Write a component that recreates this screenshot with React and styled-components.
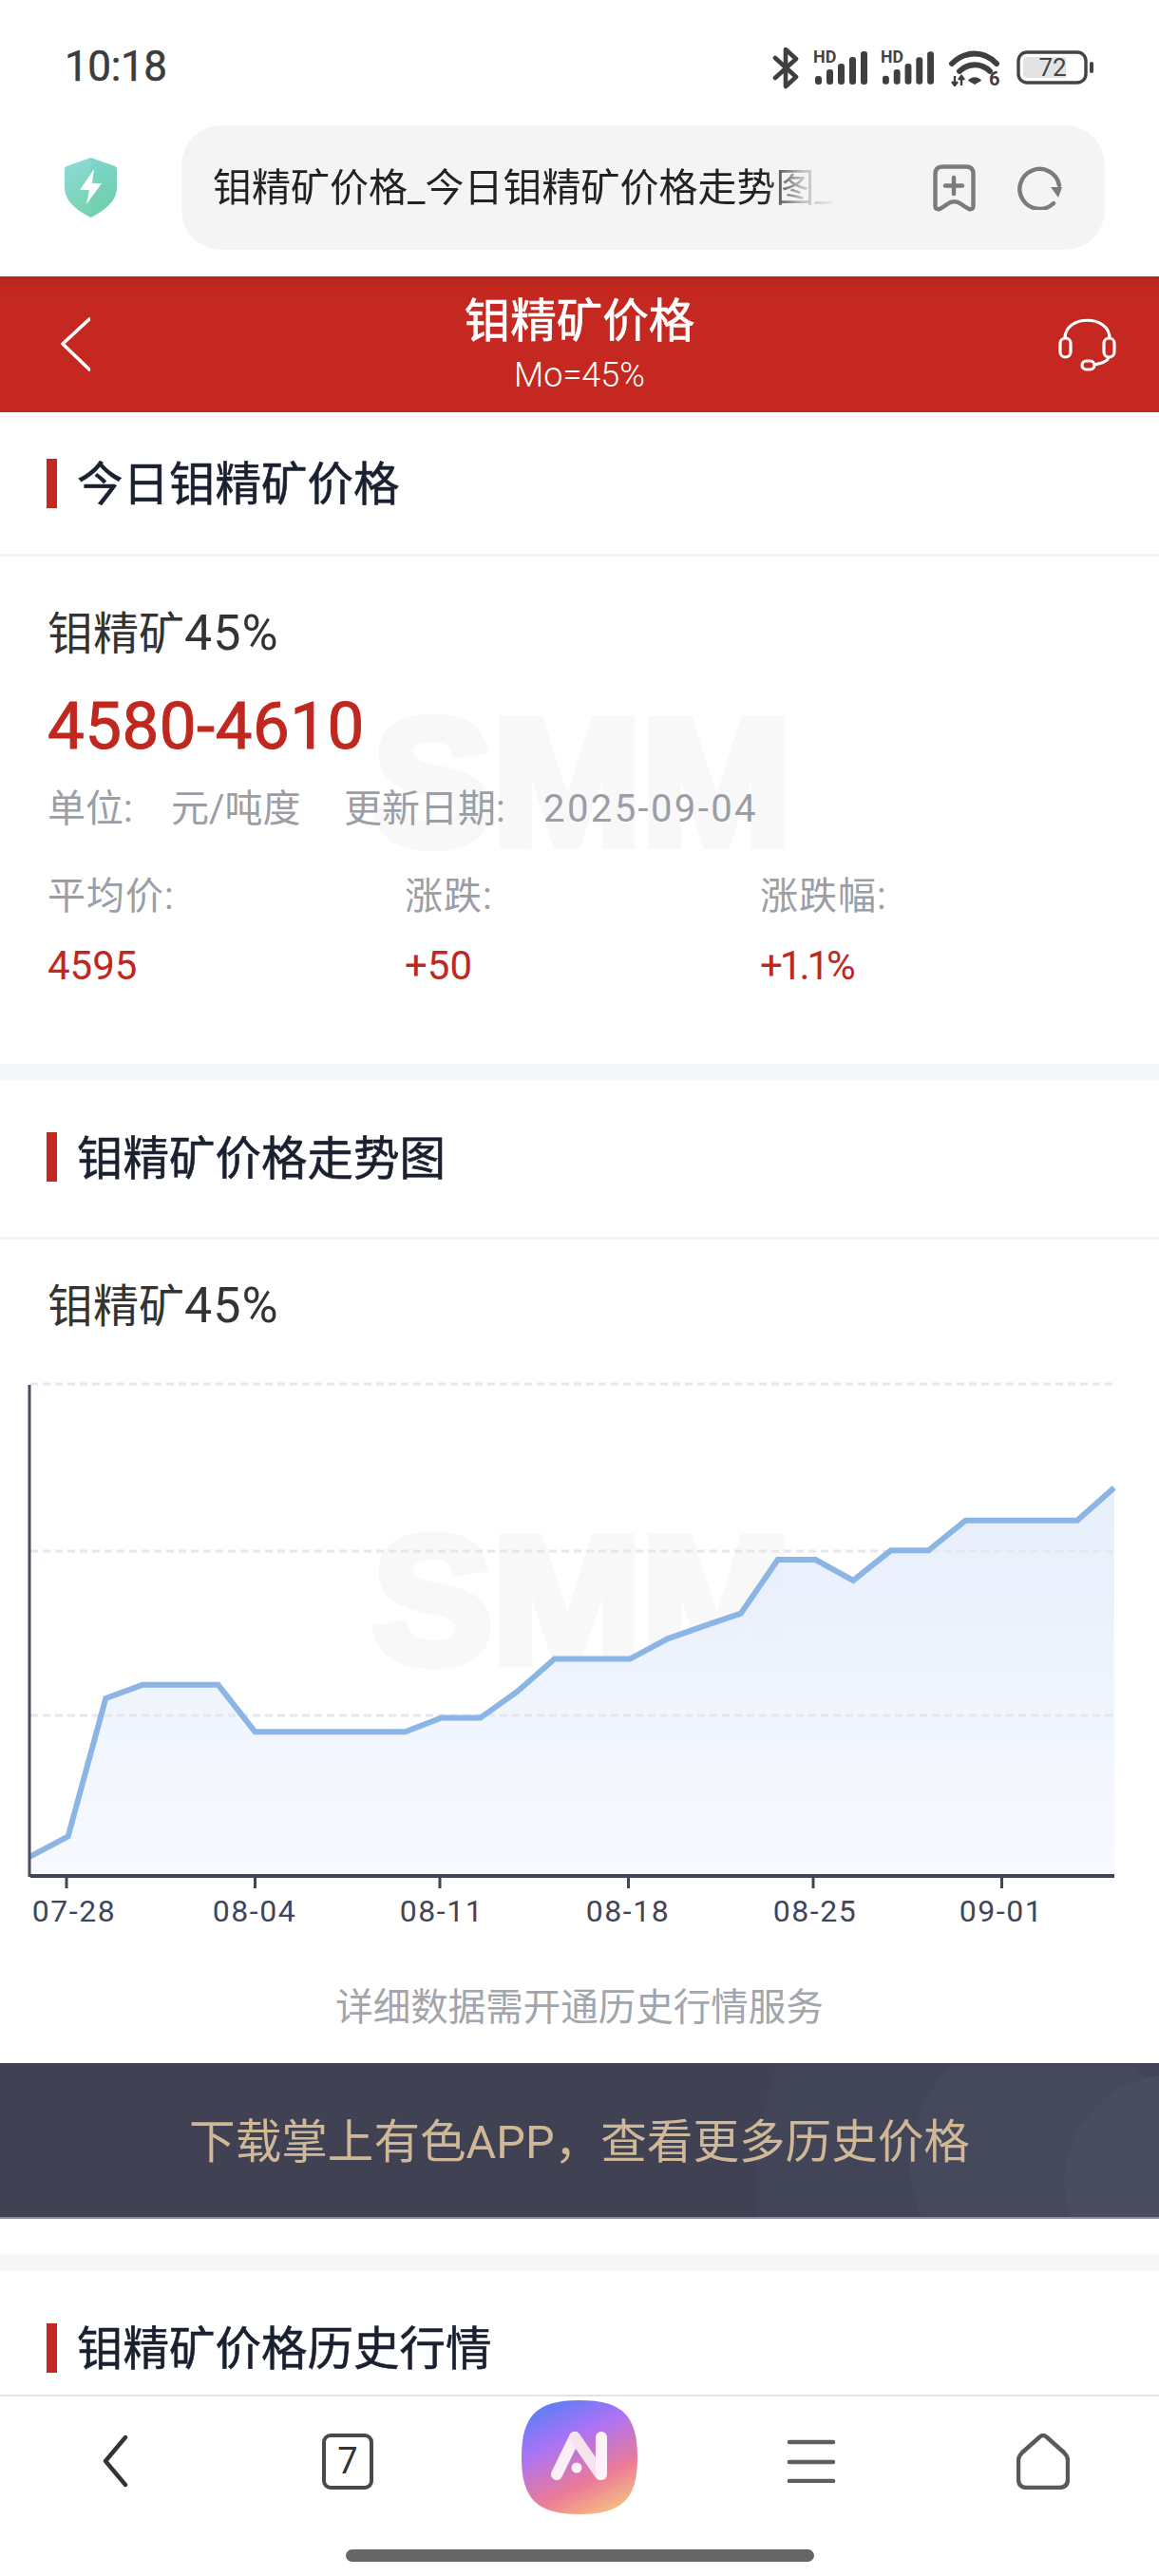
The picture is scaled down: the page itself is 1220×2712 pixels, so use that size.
import React from "react";
import styled, { createGlobalStyle } from "styled-components";

const FONT = `Roboto, "Noto Sans CJK SC", "Liberation Sans", sans-serif`;

const Global = createGlobalStyle`
  html, body { margin: 0; padding: 0; background: #fff; }
  * { box-sizing: border-box; }
`;

const Page = styled.div`
  width: 1220px; height: 2712px; overflow: hidden; display: flex; flex-direction: column;
  background: #fff; font-family: ${FONT};
`;

const StatusBar = styled.div`
  height: 132px; flex: none; display: flex; align-items: center; justify-content: space-between;
  padding: 8px 69px 0 68px;
`;
const Time = styled.div`font-size: 44px; line-height: 50px; color: #3c3c3c; letter-spacing: -0.4px; -webkit-text-stroke: 0.5px #3c3c3c;`;
const StatusIcons = styled.div`display: flex; align-items: center; gap: 14px; padding-top: 2px;`;

const Toolbar = styled.div`
  height: 159px; flex: none; display: flex; align-items: flex-start; padding-left: 68px;
`;
const ShieldWrap = styled.div`width: 55px; height: 63px; margin-top: 34px; flex: none; margin-right: 68px;`;
const AddressBar = styled.div`
  width: 972px; height: 131px; border-radius: 42px; background: #f4f4f4; display: flex; align-items: center;
  padding: 0 45px 0 33px;
`;
const AddressText = styled.div`
  width: 660px; flex: none; overflow: hidden; white-space: nowrap; font-size: 41px; line-height: 60px; color: #222;
  -webkit-mask-image: linear-gradient(90deg, #000 88%, rgba(0,0,0,.25) 94%, transparent 100%);
  mask-image: linear-gradient(90deg, #000 88%, rgba(0,0,0,.25) 94%, transparent 100%);
`;
const AddressActions = styled.div`margin-left: auto; display: flex; align-items: center; gap: 44px;`;

const Header = styled.div`
  height: 143px; flex: none; display: grid; grid-template-columns: 1fr auto 1fr; align-items: center;
  padding: 0 45px; background: linear-gradient(180deg, #b8251e 0, #c42820 12%, #c42820 100%);
  color: #fff;
`;
const HeaderLeft = styled.div`display: flex; justify-content: flex-start; padding-left: 19px;`;
const HeaderRight = styled.div`display: flex; justify-content: flex-end;`;
const HeaderCenter = styled.div`display: flex; flex-direction: column; align-items: center; gap: 7px; padding-bottom: 2px;`;
const HeaderTitle = styled.div`font-size: 48.5px; line-height: 60px; -webkit-text-stroke: 0.7px #fff;`;
const HeaderSub = styled.div`font-size: 36px; line-height: 38px; font-weight: 300;`;

const Content = styled.div`flex: 1; min-height: 0; overflow: hidden;`;

const SectionHead = styled.div`
  height: ${p => p.$h}px; display: flex; align-items: center; gap: 21px; padding: 0 0 ${p => p.$pb || 0}px 49px;
  border-bottom: 3px solid #f3f4f7;
`;
const HeadBar = styled.div`width: 11px; height: 52px; background: #c42820;`;
const HeadTitle = styled.h2`
  margin: 0; padding-top: 5px; font-size: 48.5px; line-height: 60px; font-weight: 400; color: #1b2030;
  -webkit-text-stroke: 0.6px #1b2030;
`;

const Quote = styled.div`position: relative; padding: 52px 50px 78px;`;
const Watermark = styled.div`
  position: absolute; left: ${p => p.$x}px; top: ${p => p.$y}px; font-family: "Liberation Sans", sans-serif;
  font-weight: 700; font-size: 190px; line-height: 190px; letter-spacing: -1px; color: #f8f8f8;
  -webkit-text-stroke: 10px #f8f8f8; pointer-events: none;
`;
const Layer = styled.div`position: relative;`;
const ProductName = styled.div`font-size: 48px; line-height: 60px; height: 60px; color: #333;`;
const Latin = styled.span`font-size: 52px; line-height: 0; letter-spacing: 1px;`;
const Price = styled.div`margin-top: 27px; font-size: 69px; line-height: 80px; letter-spacing: 0.5px; color: #c0281f; -webkit-text-stroke: 1px #c0281f;`;
const MetaRow = styled.div`margin-top: 22px; display: flex; font-size: 40px; line-height: 50px; color: #9b9ea5;`;
const MetaLabel = styled.span`width: ${p => p.$w}px; flex: none; white-space: nowrap; letter-spacing: ${p => p.$ls || 0}px;`;
const Stats = styled.div`margin-top: 42px; display: grid; grid-template-columns: 376px 374px 1fr;`;
const StatLabel = styled.div`font-size: 40px; line-height: 50px; color: #9b9ea5; letter-spacing: 1px;`;
const StatValue = styled.div`margin-top: 23px; font-size: 42px; line-height: 50px; color: #c0281f; letter-spacing: ${p => p.$ls || 0}px;`;

const Gap = styled.div`height: ${p => p.$h}px; background: #f6f7f9;`;

const ChartSection = styled.div`position: relative;`;
const ChartName = styled(ProductName)`height: auto; padding: 41px 0 0 50px;`;
const ChartSvg = styled.svg`display: block; margin-top: 34px; position: relative;`;
const Hint = styled.div`margin-top: 49px; text-align: center; font-size: 39.5px; line-height: 50px; color: #a2a5ab;`;
const Banner = styled.div`
  margin-top: 33px; height: 164px; display: flex; align-items: center; justify-content: center;
  font-size: 48.6px; color: #cfb897; border-bottom: 2px solid #8d8f9c; padding-bottom: 4px;
  background:
    radial-gradient(circle 114px at 1234px 126px, #4a4c5f 99%, transparent 100%),
    radial-gradient(circle 141px at 1098px 105px, #46485b 99%, transparent 100%),
    radial-gradient(circle 408px at 1201px 137px, #424457 99%, transparent 100%),
    #404254;
`;
const Spacer = styled.div`height: ${p => p.$h}px;`;

const Nav = styled.div`height: 191px; flex: none; border-top: 2px solid #e4e4e4; background: #fff; display: flex; flex-direction: column; align-items: center;`;
const NavRow = styled.div`
  width: 100%; height: 124px; padding-top: 4px; display: grid; grid-template-columns: repeat(5, 1fr);
  align-items: center; justify-items: center;
`;
const TabBox = styled.div`
  width: 54px; height: 59px; margin-top: 8px; border: 4px solid #4a4a4a; border-radius: 9px; display: flex;
  align-items: center; justify-content: center; font-size: 38px; line-height: 1; color: #333;
`;
const HomeIndicator = styled.div`width: 493px; height: 13px; margin-top: 37px; border-radius: 7px; background: #666;`;

const Bluetooth = () => (
  <svg width="29" height="45" viewBox="0 0 29 45" fill="none" stroke="#3f3f3f" strokeWidth="4.6" strokeLinejoin="round" strokeLinecap="round">
    <path d="M3 12 L25 32 L14 42 V3 L25 13 L3 33" />
  </svg>
);

const Signal = ({ w = 57 }) => (
  <svg width={w} height="38" viewBox="0 0 57 38">
    <text x="0" y="14" fontFamily="Roboto, sans-serif" fontSize="18" fontWeight="700" fill="#444">HD</text>
    {[[2, 9], [14, 16], [26, 22], [38, 29], [50, 35]].map(([x, h]) => (
      <rect key={x} x={x} y={37 - h} width="7" height={h} rx="3" fill="#3f3f3f" />
    ))}
  </svg>
);

const Wifi = () => (
  <svg width="56" height="40" viewBox="0 0 56 40" fill="none">
    <path d="M5 16 C19 2 39 2 52 16" stroke="#3f3f3f" strokeWidth="6" strokeLinecap="round" />
    <path d="M13 24 C22 15 36 15 45 24" stroke="#3f3f3f" strokeWidth="6" strokeLinecap="round" />
    <path d="M22 34 C25 29 33 29 36 34 L29 38 Z" fill="#3f3f3f" />
    <path d="M8 29 V39 M5 35 L8 39 L11 35 M15 39 V29 M12 33 L15 29 L18 33" stroke="#3f3f3f" strokeWidth="2.4" />
    <text x="44" y="39" fontFamily="Roboto, sans-serif" fontSize="20" fontWeight="700" fill="#3f3f3f">6</text>
  </svg>
);

const Battery = () => (
  <svg width="84" height="36" viewBox="0 0 84 36">
    <rect x="5" y="2" width="71" height="32" rx="9" fill="none" stroke="#444" strokeWidth="3.4" />
    <path d="M15 7 H55 V29 H15 Q10 29 10 24 V12 Q10 7 15 7 Z" fill="#e3e3e3" />
    <text x="41" y="27" textAnchor="middle" fontFamily="Roboto, sans-serif" fontSize="26" fill="#444">72</text>
    <rect x="80" y="12" width="4" height="12" rx="2" fill="#444" />
  </svg>
);

const Shield = () => (
  <svg width="55" height="63" viewBox="0 0 55 63">
    <defs>
      <linearGradient id="sh" x1="0.2" y1="0" x2="0.7" y2="1">
        <stop offset="0" stopColor="#8bdad8" />
        <stop offset="1" stopColor="#75d1a8" />
      </linearGradient>
    </defs>
    <path d="M27.5 0 L53 9 Q55 10 55 12 V32 C55 46 40 57 27.5 63 C15 57 0 46 0 32 V12 Q0 10 2 9 Z" fill="url(#sh)" />
    <path d="M27.5 0 L53 9 Q55 10 55 12 V32 C55 46 40 57 27.5 63 Z" fill="#5cc9b8" opacity=".22" />
    <path d="M31 12 L16 34 H26 L23 49 L39 27 H29 Z" fill="#fff" />
  </svg>
);

const BookmarkPlus = () => (
  <svg width="45" height="50" viewBox="0 0 45 50" fill="none" stroke="#7b7b7b" strokeWidth="4.4" strokeLinecap="round" strokeLinejoin="round">
    <path d="M10 2.5 H35 Q42.5 2.5 42.5 10 V44 Q42.5 48 38 47 Q34 45 30 42 Q22.5 36.5 15 42 Q11 45 7 47 Q2.5 48 2.5 44 V10 Q2.5 2.5 10 2.5 Z" />
    <path d="M22 14 V31 M13 22.5 H31" />
  </svg>
);

const Reload = () => (
  <svg width="47" height="47" viewBox="0 0 47 47" fill="none">
    <path d="M38 40 A21 21 0 1 1 44 21" stroke="#7b7b7b" strokeWidth="4.4" strokeLinecap="round" />
    <path d="M35 23 L47 23 L43 34 Z" fill="#7b7b7b" />
  </svg>
);

const ChevronWhite = () => (
  <svg width="31" height="57" viewBox="0 0 31 57" fill="none" stroke="#fff" strokeWidth="3.6" strokeLinecap="round" strokeLinejoin="round">
    <path d="M30 2 L2 28 L30 55" />
  </svg>
);

const Headset = () => (
  <svg width="61" height="57" viewBox="0 0 61 57" fill="none" stroke="#fff" strokeWidth="3.2">
    <path d="M7 22 C7 -3 54 -3 54 22" />
    <rect x="2" y="22" width="11" height="20" rx="5.5" />
    <rect x="48" y="22" width="11" height="20" rx="5.5" />
    <path d="M53 42 C52 47 44 49 37 50" />
    <rect x="25" y="46" width="13" height="9" rx="4.5" />
  </svg>
);

const NavBack = () => (
  <svg width="30" height="56" viewBox="0 0 30 56" fill="none" stroke="#333" strokeWidth="4.4" strokeLinecap="round" strokeLinejoin="round" style={{ marginTop: 8 }}>
    <path d="M25 3 L4 28 L25 53" />
  </svg>
);

const NavLogo = () => (
  <svg width="122" height="120" viewBox="0 0 122 120">
    <defs>
      <linearGradient id="lg" x1="0.25" y1="0" x2="0.72" y2="1">
        <stop offset="0" stopColor="#5d7df6" />
        <stop offset="0.33" stopColor="#ab73f5" />
        <stop offset="0.72" stopColor="#ec7b96" />
        <stop offset="1" stopColor="#f6bd82" />
      </linearGradient>
    </defs>
    <path d="M61 0 C106 0 122 16 122 60 C122 104 106 120 61 120 C16 120 0 104 0 60 C0 16 16 0 61 0 Z" fill="url(#lg)" />
    <g fill="none" strokeLinecap="round" strokeWidth="12">
      <path d="M37 78 L56 39" stroke="#fbeef6" />
      <path d="M56 39 L83 78" stroke="#f6e3ef" />
      <path d="M84 39 V78" stroke="#fdf3f8" />
    </g>
    <circle cx="58" cy="71" r="5.5" fill="#fdf1f6" />
  </svg>
);

const NavMenu = () => (
  <svg width="52" height="46" viewBox="0 0 52 46" stroke="#5f5f5f" strokeWidth="4.6" strokeLinecap="round" style={{ marginTop: 8 }}>
    <path d="M3 3 H49 M3 24 H49 M3 44 H49" />
  </svg>
);

const NavHome = () => (
  <svg width="56" height="59" viewBox="0 0 56 59" fill="none" stroke="#595959" strokeWidth="4.4" strokeLinejoin="round" style={{ marginTop: 8 }}>
    <path d="M24 4 Q28 0 32 4 L50 20 Q54 24 54 28 V48 Q54 57 45 57 H11 Q2 57 2 48 V28 Q2 24 6 20 Z" />
  </svg>
);

const toX = x => x / 1.285;
const toY = y => 1420 + y / 2.44 - 1440;
const raw = [
  [40, 1305], [92, 1253], [143, 898], [193, 863], [295, 863], [345, 984], [548, 984], [597, 948], [650, 948],
  [700, 880], [750, 797], [852, 797], [903, 745], [952, 712], [1002, 680], [1052, 542], [1103, 542], [1154, 595],
  [1205, 518], [1256, 518], [1306, 441], [1457, 441], [1507, 357],
];
const pts = raw.map(([x, y]) => [toX(x), toY(y)]);
const line = pts.map(([x, y]) => `${x.toFixed(1)},${y.toFixed(1)}`).join(" ");
const axisY = 535;
const area = `31,${axisY} ${line} 1173,${axisY}`;
const ticks = [
  [70, "07-28", 78], [268.5, "08-04", 268], [463, "08-11", 465], [661.5, "08-18", 661], [856, "08-25", 858], [1054.5, "09-01", 1054],
];

const Chart = () => (
  <ChartSvg width="1220" height="600" viewBox="0 0 1220 600">
    <defs>
      <linearGradient id="areaFill" x1="0" y1="0" x2="0" y2="1">
        <stop offset="0" stopColor="#e3ecfb" stopOpacity="0.85" />
        <stop offset="1" stopColor="#f7f9ff" stopOpacity="0.95" />
      </linearGradient>
    </defs>
    <polygon points={area} fill="url(#areaFill)" />
    {[17, 193, 366].map(y => (
      <line key={y} x1="32" x2="1173" y1={y} y2={y} stroke="#e6e7ee" strokeWidth="3" strokeDasharray="8 5" />
    ))}
    <polyline points={line} fill="none" stroke="#8bb5e5" strokeWidth="6" strokeLinejoin="miter" />
    <line x1="31" x2="31" y1="18" y2="536" stroke="#4a4d5f" strokeWidth="3" />
    <line x1="32" x2="1173" y1={axisY} y2={axisY} stroke="#41445a" strokeWidth="4" />
    {ticks.map(([x, label, lx]) => (
      <g key={label}>
        <line x1={x} x2={x} y1={axisY} y2={548} stroke="#41445a" strokeWidth="3" />
        <text x={lx} y="583" textAnchor="middle" fontFamily={FONT} fontSize="32" letterSpacing="1.5" fill="#41455a">{label}</text>
      </g>
    ))}
  </ChartSvg>
);

export default function App() {
  return (
    <Page>
      <Global />
      <StatusBar>
        <Time>10:18</Time>
        <StatusIcons>
          <Bluetooth />
          <Signal />
          <Signal w={56} />
          <Wifi />
          <Battery />
        </StatusIcons>
      </StatusBar>
      <Toolbar>
        <ShieldWrap><Shield /></ShieldWrap>
        <AddressBar>
          <AddressText>钼精矿价格_今日钼精矿价格走势图_</AddressText>
          <AddressActions>
            <BookmarkPlus />
            <Reload />
          </AddressActions>
        </AddressBar>
      </Toolbar>
      <Header>
        <HeaderLeft><ChevronWhite /></HeaderLeft>
        <HeaderCenter>
          <HeaderTitle>钼精矿价格</HeaderTitle>
          <HeaderSub>Mo=45%</HeaderSub>
        </HeaderCenter>
        <HeaderRight><Headset /></HeaderRight>
      </Header>
      <Content>
        <SectionHead $h={152}>
          <HeadBar />
          <HeadTitle>今日钼精矿价格</HeadTitle>
        </SectionHead>
        <Quote>
          <Watermark $x={392} $y={142}>SMM</Watermark>
          <Layer>
            <ProductName>钼精矿<Latin>45%</Latin></ProductName>
            <Price>4580-4610</Price>
            <MetaRow>
              <MetaLabel $w={130}>单位:</MetaLabel>
              <MetaLabel $w={182}>元/吨度</MetaLabel>
              <MetaLabel $w={210}>更新日期:</MetaLabel>
              <MetaLabel $w={240} $ls={2.4}>2025-09-04</MetaLabel>
            </MetaRow>
            <Stats>
              <div><StatLabel>平均价:</StatLabel><StatValue>4595</StatValue></div>
              <div><StatLabel>涨跌:</StatLabel><StatValue>+50</StatValue></div>
              <div><StatLabel>涨跌幅:</StatLabel><StatValue $ls={-3}>+1.1%</StatValue></div>
            </Stats>
          </Layer>
        </Quote>
        <Gap $h={17} />
        <SectionHead $h={168} $pb={3}>
          <HeadBar />
          <HeadTitle>钼精矿价格走势图</HeadTitle>
        </SectionHead>
        <ChartSection>
          <Watermark $x={392} $y={284}>SMM</Watermark>
          <Layer>
            <ChartName>钼精矿<Latin>45%</Latin></ChartName>
            <Chart />
          </Layer>
        </ChartSection>
        <Hint>详细数据需开通历史行情服务</Hint>
        <Banner>{"下载掌上有色APP\uFF0C查看更多历史价格"}</Banner>
        <Spacer $h={37} />
        <Gap $h={18} />
        <SectionHead $h={168} $pb={4}>
          <HeadBar />
          <HeadTitle>钼精矿价格历史行情</HeadTitle>
        </SectionHead>
      </Content>
      <Nav>
        <NavRow>
          <NavBack />
          <TabBox>7</TabBox>
          <NavLogo />
          <NavMenu />
          <NavHome />
        </NavRow>
        <HomeIndicator />
      </Nav>
    </Page>
  );
}
